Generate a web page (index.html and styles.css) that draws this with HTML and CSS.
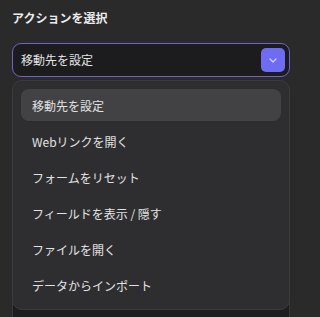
FILE: index.html
```html
<!DOCTYPE html>
<html lang="ja">
<head>
<meta charset="utf-8">
<link rel="stylesheet" href="styles.css">
</head>
<body>
<div class="field">
  <div class="label">アクションを選択</div>
  <div class="select-wrap">
    <div class="select">
      <span class="value">移動先を設定</span>
      <span class="chev">
        <svg width="8" height="5" viewBox="0 0 8 5"><polyline points="1,1 4,4 7,1" fill="none" stroke="#d6d4ff" stroke-width="1.2" stroke-linecap="round" stroke-linejoin="round"/></svg>
      </span>
    </div>
    <div class="behind"></div>
    <ul class="menu">
      <li class="item active">移動先を設定</li>
      <li class="item">Webリンクを開く</li>
      <li class="item">フォームをリセット</li>
      <li class="item">フィールドを表示 / 隠す</li>
      <li class="item">ファイルを開く</li>
      <li class="item">データからインポート</li>
    </ul>
  </div>
</div>
</body>
</html>
```
FILE: styles.css
```css
html, body {
  margin: 0;
  padding: 0;
  background: #2a2a2b;
  height: 100%;
  overflow: hidden;
}
body {
  font-family: "Noto Sans CJK JP", "Noto Sans", sans-serif;
  color: #e6e6e6;
}
.field {
  width: 278px;
  padding: 10px 12px 0 12px;
}
.label {
  font-size: 12px;
  font-weight: 700;
  line-height: 16px;
  color: #ececec;
  margin-bottom: 17px;
}
.select-wrap {
  position: relative;
}
.select {
  box-sizing: border-box;
  height: 34px;
  border: 1px solid #6d63c9;
  border-radius: 9px;
  background: #1c1c1f;
  display: flex;
  align-items: center;
  justify-content: space-between;
  padding: 0 4px 0 8px;
}
.value {
  font-size: 12px;
  line-height: 16px;
  color: #e4e4e4;
}
.chev {
  width: 24px;
  height: 24px;
  border-radius: 5px;
  background: #6e6cf2;
  display: flex;
  align-items: center;
  justify-content: center;
}
.behind {
  box-sizing: border-box;
  margin-top: 8px;
  height: 240px;
  border: 1px solid #38383b;
  border-radius: 8px;
  background: #1d1d1f;
}
.menu {
  position: absolute;
  top: 37px;
  left: 0;
  right: 0;
  margin: 0;
  padding: 8px;
  list-style: none;
  background: #2e2e30;
  border: 1px solid #3b3b3e;
  border-radius: 10px;
  display: flex;
  flex-direction: column;
  gap: 4px;
}
.item {
  height: 32px;
  display: flex;
  align-items: center;
  padding-left: 11px;
  border-radius: 8px;
  font-size: 12px;
  color: #e2e2e2;
}
.item.active {
  background: #424245;
}
```
